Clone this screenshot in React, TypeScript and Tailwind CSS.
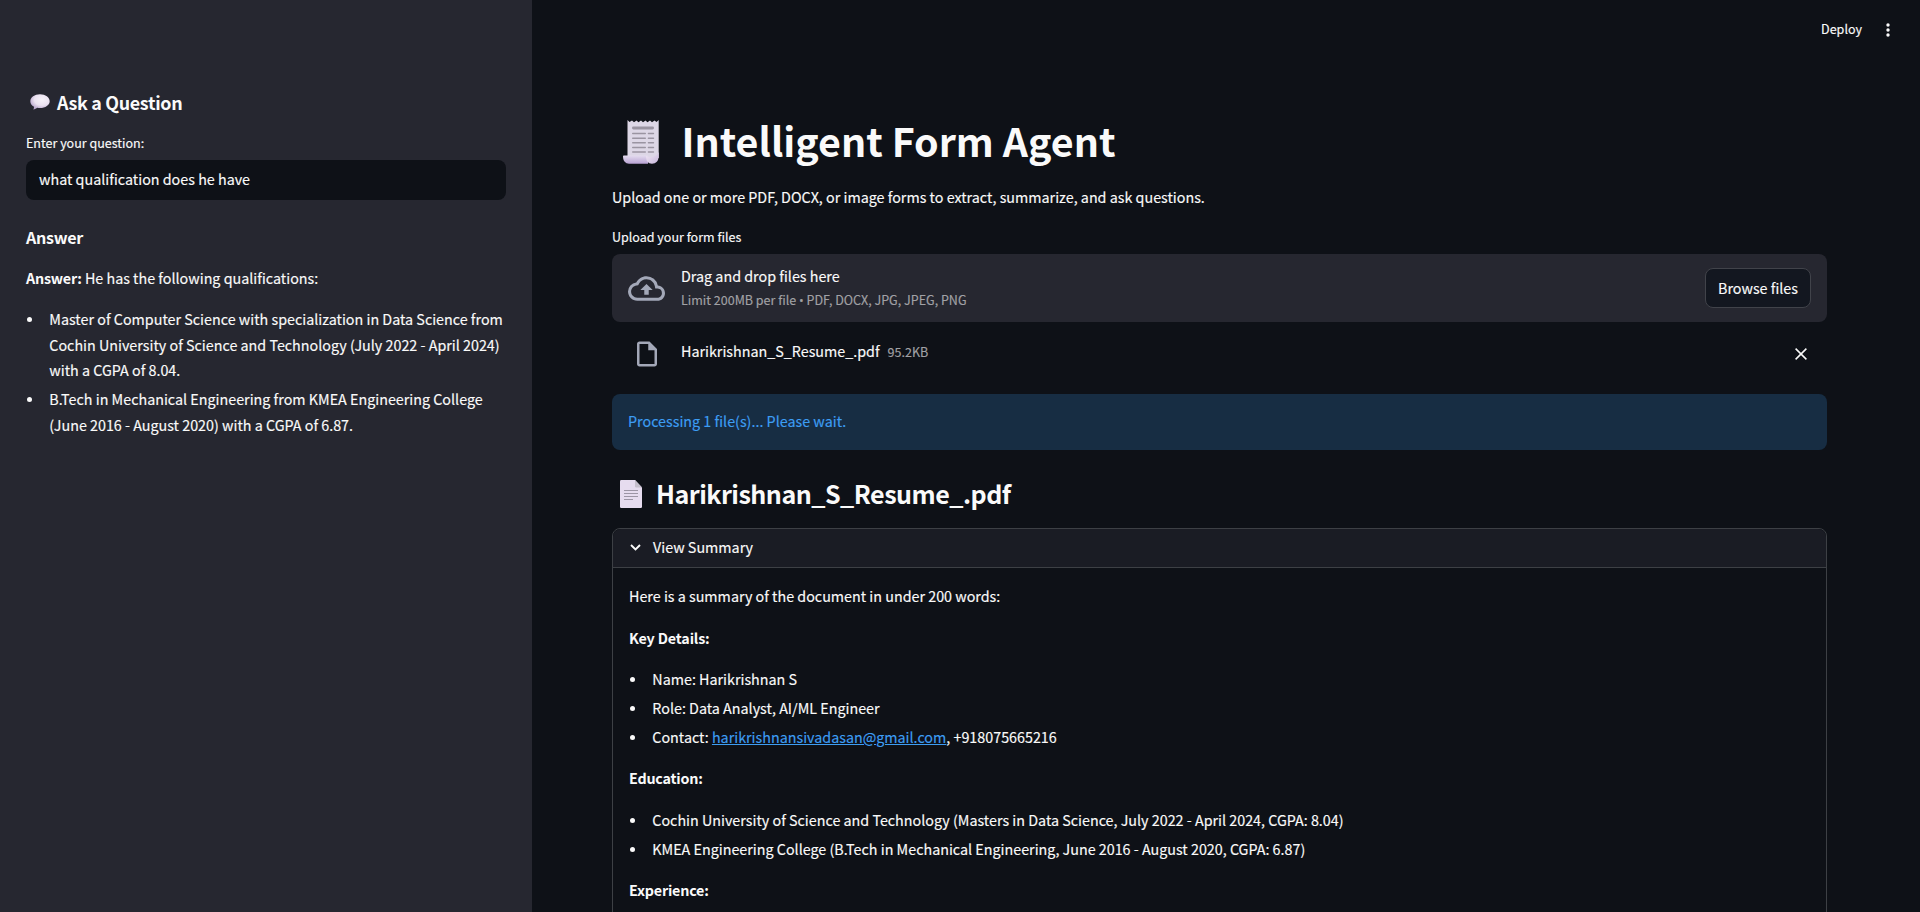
import React from "react";

function Bullets({ items }: { items: React.ReactNode[] }) {
  return (
    <ul className="flex flex-col gap-[3.2px]">
      {items.map((item, i) => (
        <li key={i} className="flex leading-[25.6px]">
          <span className="mt-[11px] mr-[17.3px] ml-px size-[5px] shrink-0 rounded-full bg-[#fafafa]" />
          <span>{item}</span>
        </li>
      ))}
    </ul>
  );
}

function SpeechBubble() {
  return (
    <svg className="ml-[4px] h-[16px] w-[20px] shrink-0" viewBox="0 0 20 16">
      <defs>
        <radialGradient id="bubble" cx="0.6" cy="0.35" r="0.65">
          <stop offset="0" stopColor="#f7f3fa" />
          <stop offset="0.6" stopColor="#ebe2f1" />
          <stop offset="1" stopColor="#bba9cf" />
        </radialGradient>
      </defs>
      <path d="M10 .3C4.600.3.3 3.300.3 7.200c0 2.300 1.400 4.300 3.700 5.500.1 1-.2 2-.7 2.700 1.600-.1 3-.8 4-1.600.9.2 1.800.3 2.700.3 5.400 0 9.700-3.100 9.700-6.900S15.400.3 10 .3Z" fill="url(#bubble)" />
    </svg>
  );
}

function Receipt() {
  return (
    <svg className="mt-[5px] ml-[11px] h-[44px] w-[36px] shrink-0" viewBox="0 0 36 44">
      <defs>
        <linearGradient id="roll" x1="0" y1="0" x2="0" y2="1">
          <stop offset="0" stopColor="#e4dcef" />
          <stop offset="1" stopColor="#b8a2d3" />
        </linearGradient>
        <linearGradient id="curl" x1="0" y1="0" x2="1" y2="1">
          <stop offset="0" stopColor="#f3eaf6" />
          <stop offset="1" stopColor="#c6b5da" />
        </linearGradient>
      </defs>
      <path d="M4.500 0 6.500 2 9 .5 11 2.300 13.500.5 15.500 2.300 18 .5 20 2.300 22.500.5 24.500 2.300 27 .5 29 2.300 31.500.5 33.500 2 35.700 0V38H4.500Z" fill="#ddd7e6" />
      <path d="M0 36.500C0 35.700.5 35.500 1 35.500H25V43.700H6C2.500 43.700 0 41 0 36.500Z" fill="url(#roll)" />
      <path d="M23 36C23 41 25 43.700 29 43.700C33 43.700 35.700 41 35.700 36V32C34 36 29 38.500 23 36Z" fill="url(#curl)" />
      <g fill="#9a94a1">
        <rect x="9" y="6.500" width="22" height="3" rx="1.400" />
        {[12.7, 17.4, 22, 26.7, 31.3].map((y) => (
          <g key={y}>
            <rect x="9" y={y} width="14" height="1.500" rx=".7" />
            <rect x="24.700" y={y} width="6.500" height="1.500" rx=".7" />
          </g>
        ))}
      </g>
    </svg>
  );
}

function PageIcon() {
  return (
    <svg className="mt-[2px] ml-[8px] h-[28px] w-[22px] shrink-0" viewBox="0 0 22 28">
      <path d="M1.200 0H15L22 7.500V26.800Q22 28 20.800 28H1.200Q0 28 0 26.800V1.200Q0 0 1.200 0Z" fill="#e6dcef" />
      <path d="M15 0 22 7.500H16.200Q15 7.500 15 6.300Z" fill="#c5bfcc" />
      <g fill="#9c95a5">
        <rect x="4" y="10" width="14" height="1" />
        <rect x="4" y="13" width="14" height="1" />
        <rect x="4" y="16" width="14" height="1" />
        <rect x="4" y="19" width="9" height="1" />
      </g>
    </svg>
  );
}

export default function App() {
  return (
    <div className="flex h-[912px] w-[1920px] overflow-hidden bg-[#0e1117] font-['Noto_Sans_CJK_SC',sans-serif] text-[14.32px] text-[#fafafa] [-webkit-text-stroke:0.15px]">
      <aside className="flex w-[532px] shrink-0 flex-col bg-[#262730] px-[26px] pt-[90px]">
        <div className="flex h-[24px] items-center">
          <SpeechBubble />
          <h2 className="ml-[7px] text-[17.9px] leading-[24px] font-semibold tracking-[-0.32px] [-webkit-text-stroke:0]">Ask a Question</h2>
        </div>
        <label className="mt-[19px] text-[12.53px] leading-[20px]">Enter your question:</label>
        <div className="mt-[7px] flex h-[40px] items-center rounded-lg bg-[#0e1117] px-[13px] pb-[2px]">
          what qualification does he have
        </div>
        <h3 className="mt-[26px] text-[16.1px] leading-[22px] font-semibold tracking-[-0.3px] [-webkit-text-stroke:0]">Answer</h3>
        <p className="mt-[17px] mb-[15.5px] leading-[25.6px]">
          <strong className="tracking-[-0.2px] [-webkit-text-stroke:0]">Answer:</strong> He has the following qualifications:
        </p>
        <Bullets
          items={[
            <>Master of Computer Science with specialization in Data Science from<br />Cochin University of Science and Technology (July 2022 - April 2024)<br />with a CGPA of 8.04.</>,
            <>B.Tech in Mechanical Engineering from KMEA Engineering College<br />(June 2016 - August 2020) with a CGPA of 6.87.</>,
          ]}
        />
      </aside>
      <main className="flex flex-1 flex-col">
        <header className="flex h-[60px] shrink-0 items-center justify-end pr-[30px]">
          <span className="mb-px text-[12.53px]">Deploy</span>
          <svg className="ml-[24px] h-[14px] w-[4px]" viewBox="0 0 4 14" fill="#fafafa">
            <circle cx="2" cy="2" r="1.700" /><circle cx="2" cy="7" r="1.700" /><circle cx="2" cy="12" r="1.700" />
          </svg>
        </header>
        <div className="flex flex-col pt-[53.5px] pr-[93px] pl-[80px]">
          <div className="flex h-[52px] items-center">
            <Receipt />
            <h1 className="ml-[22.5px] text-[39.4px] leading-[52px] font-bold [-webkit-text-stroke:0]">Intelligent Form Agent</h1>
          </div>
          <p className="mt-[18.5px] leading-[25.6px]">Upload one or more PDF, DOCX, or image forms to extract, summarize, and ask questions.</p>
          <label className="mt-[17.9px] text-[12.53px] leading-[20px]">Upload your form files</label>
          <section className="mt-[6.5px] flex h-[68px] items-center rounded-lg bg-[#262730] px-[16px]">
            <svg className="mt-px size-[37px] shrink-0" viewBox="0 0 24 24" fill="#a3a8b8">
              <path d="M19.350 10.040A7.490 7.490 0 0 0 12 4C9.110 4 6.600 5.640 5.350 8.040A5.994 5.994 0 0 0 0 14c0 3.310 2.690 6 6 6h13c2.760 0 5-2.240 5-5 0-2.640-2.050-4.780-4.650-4.960zM19 18H6c-2.210 0-4-1.790-4-4 0-2.050 1.530-3.760 3.560-3.970l1.070-.11.5-.95A5.469 5.469 0 0 1 12 6c2.620 0 4.880 1.860 5.390 4.430l.3 1.500 1.530.11A2.980 2.980 0 0 1 22 15c0 1.650-1.350 3-3 3zM8 13h2.550v3h2.900v-3H16l-4-4z" />
            </svg>
            <div className="mb-[2px] ml-[16px] flex flex-1 flex-col gap-[2px]">
              <span className="leading-[24px]">Drag and drop files here</span>
              <span className="text-[12.53px] leading-[20px] text-[#a1a1a5]">Limit 200MB per file <span className="font-['Open_Sans',sans-serif] leading-none">•</span> PDF, DOCX, JPG, JPEG, PNG</span>
            </div>
            <button className="flex h-[40px] w-[106px] items-center justify-center rounded-lg border border-[#41434a] bg-[#131720] pb-px">Browse files</button>
          </section>
          <div className="mt-[16px] flex h-[32px] items-center px-[16px]">
            <svg className="ml-[3.5px] size-[30px] shrink-0" viewBox="0 0 24 24" fill="#a3a8b8">
              <path d="M6 2c-1.100 0-1.990.9-1.990 2L4 20c0 1.100.89 2 1.990 2H18c1.100 0 2-.9 2-2V8l-6-6H6zm0 18V4h7v5h5v11H6z" />
            </svg>
            <span className="mb-[6px] ml-[19.5px]">Harikrishnan_S_Resume_.pdf</span>
            <span className="mb-[4px] ml-[8px] text-[12.53px] text-[#a1a1a5]">95.2KB</span>
            <svg className="mr-[4px] ml-auto size-[12px]" viewBox="0 0 12 12" stroke="#fafafa" strokeWidth="1.500"><path d="M.6.6 11.400 11.400M11.400.6.6 11.400" /></svg>
          </div>
          <div className="mt-[24px] flex h-[56px] items-center rounded-lg bg-[#172d43] px-[16px] pb-[2px] text-[#3d9df3]">Processing 1 file(s)... Please wait.</div>
          <div className="mt-[26px] flex h-[34px] items-center">
            <PageIcon />
            <h2 className="ml-[14px] text-[25.07px] leading-[34px] font-semibold tracking-[-0.51px] [-webkit-text-stroke:0]">Harikrishnan_S_Resume_.pdf</h2>
          </div>
          <section className="mt-[18px] h-[500px] rounded-lg border border-[#3d4045]">
            <div className="flex h-[39px] items-center rounded-t-lg border-b border-[#3d4045] bg-[#1a1c24] px-[17px] pb-[2px]">
              <svg className="mt-[2px] h-[7px] w-[11px]" viewBox="0 0 11 7" fill="none" stroke="#fafafa" strokeWidth="1.900"><path d="M1 1 5.500 5.500 10 1" /></svg>
              <span className="ml-[12px]">View Summary</span>
            </div>
            <div className="flex flex-col gap-4 px-[16px] pt-[15.1px] leading-[25.6px]">
              <p>Here is a summary of the document in under 200 words:</p>
              <p className="font-bold tracking-[-0.15px] [-webkit-text-stroke:0]">Key Details:</p>
              <Bullets items={["Name: Harikrishnan S", "Role: Data Analyst, AI/ML Engineer", <>Contact: <a className="text-[#3d9df3] underline">harikrishnansivadasan@gmail.com</a>, +918075665216</>]} />
              <p className="font-bold tracking-[-0.2px] [-webkit-text-stroke:0]">Education:</p>
              <Bullets items={["Cochin University of Science and Technology (Masters in Data Science, July 2022 - April 2024, CGPA: 8.04)", "KMEA Engineering College (B.Tech in Mechanical Engineering, June 2016 - August 2020, CGPA: 6.87)"]} />
              <p className="font-bold tracking-[-0.2px] [-webkit-text-stroke:0]">Experience:</p>
            </div>
          </section>
        </div>
      </main>
    </div>
  );
}
